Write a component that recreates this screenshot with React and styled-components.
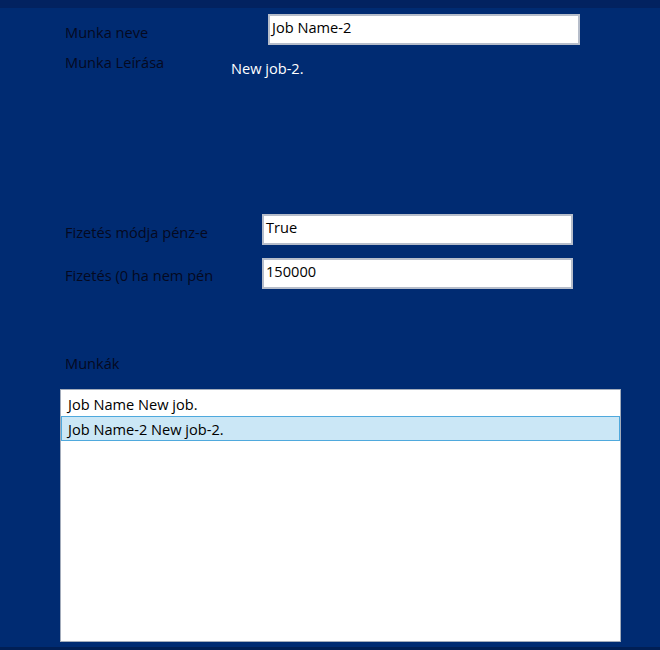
import React from "react";
import styled, { createGlobalStyle } from "styled-components";

const jobs = [
  { name: "Job Name", desc: "New job." },
  { name: "Job Name-2", desc: "New job-2." }
];

const selectedIndex = 1;

const GlobalStyle = createGlobalStyle`
  html, body {
    margin: 0;
    padding: 0;
    background: #002b72;
  }
  body {
    font-family: "Open Sans", "Noto Sans", sans-serif;
    font-size: 14.6px;
  }
`;

const App = () => (
  <>
    <GlobalStyle />
    <Window>
      <TitleStrip />
      <Form>
        <FieldRow top={6} inputLeft={203}>
          <Label pad={8}>Munka neve</Label>
          <TextBox width={312}>Job Name-2</TextBox>
        </FieldRow>

        <DescRow>
          <Label pad={7}>Munka Leírása</Label>
          <Description>New job-2.</Description>
        </DescRow>

        <FieldRow top={0} inputLeft={197}>
          <Label pad={8}>Fizetés módja pénz-e</Label>
          <TextBox width={311}>True</TextBox>
        </FieldRow>

        <FieldRow top={13} inputLeft={197}>
          <Label pad={7}>Fizetés (0 ha nem pén</Label>
          <TextBox width={311}>150000</TextBox>
        </FieldRow>

        <SectionLabel>Munkák</SectionLabel>
      </Form>

      <ListBox>
        {jobs.map((job, i) => (
          <ListItem key={job.name} selected={i === selectedIndex}>
            {job.name} {job.desc}
          </ListItem>
        ))}
      </ListBox>
      <BottomStrip />
    </Window>
  </>
);

App.displayName = "App";

const Window = styled.div`
  display: flex;
  flex-direction: column;
  width: 660px;
  height: 650px;
  background: #002b72;
  overflow: hidden;
`;

const TitleStrip = styled.div`
  height: 8px;
  background: #022260;
  flex-shrink: 0;
`;

const BottomStrip = styled.div`
  height: 3px;
  margin-top: auto;
  background: #011f55;
`;

const Form = styled.div`
  display: flex;
  flex-direction: column;
  padding-left: 65px;
`;

const FieldRow = styled.div`
  display: grid;
  grid-template-columns: ${(p) => p.inputLeft}px auto;
  align-items: start;
  margin-top: ${(p) => p.top}px;
`;

const Label = styled.div`
  color: #05091f;
  font-size: 14.6px;
  line-height: 20px;
  padding-top: ${(p) => p.pad}px;
  white-space: nowrap;
`;

const TextBox = styled.div`
  box-sizing: border-box;
  width: ${(p) => p.width}px;
  height: 31px;
  padding: 1px 3px 0 2px;
  background: #fff;
  border: 2px solid #b6bdca;
  color: #000;
  font-size: 14.6px;
  line-height: 20px;
`;

const DescRow = styled.div`
  display: grid;
  grid-template-columns: 166px auto;
  align-items: start;
  height: 169px;
`;

const Description = styled.div`
  color: #fff;
  font-size: 14.6px;
  line-height: 20px;
  padding-top: 13px;
`;

const SectionLabel = styled.div`
  color: #05091f;
  font-size: 14.6px;
  line-height: 20px;
  margin-top: 64px;
`;

const ListBox = styled.div`
  box-sizing: border-box;
  display: flex;
  flex-direction: column;
  margin: 16px 0 0 60px;
  width: 561px;
  height: 253px;
  padding-top: 1px;
  background: #fff;
  border: 1px solid #a3acbb;
  flex-shrink: 0;
`;

const ListItem = styled.div`
  box-sizing: border-box;
  height: 25px;
  padding: 1px 6px 0 6px;
  font-size: 14.6px;
  line-height: 22px;
  color: #000;
  border: 1px solid ${(p) => (p.selected ? "#4fa9dd" : "transparent")};
  background: ${(p) => (p.selected ? "#cbe7f6" : "transparent")};
`;

export default App;
